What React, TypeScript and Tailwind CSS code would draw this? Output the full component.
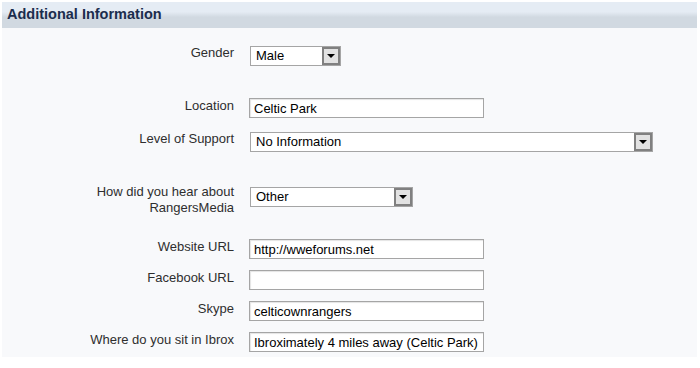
import { useState } from "react";

const font = { fontFamily: '"Liberation Sans", Arial, sans-serif' };

function Arrow() {
  return (
    <span className="flex h-full w-[18px] items-center justify-center border-2 border-[#808080] bg-[#e2e2e2]">
      <svg width="8" height="4" viewBox="0 0 8 4">
        <polygon points="0,0 8,0 4,4" fill="#000" />
      </svg>
    </span>
  );
}

function FakeSelect({ value, width }: { value: string; width: string }) {
  return (
    <div
      className={`ml-px mt-px flex h-5 items-stretch border border-[#a5a5a5] bg-white ${width}`}
    >
      <span className="flex-1 pl-[5px] text-[13px] leading-[18px] text-black">
        {value}
      </span>
      <Arrow />
    </div>
  );
}

function TextBox({ value }: { value: string }) {
  const [v, setV] = useState(value);
  return (
    <input
      className="block h-5 w-[235px] border border-[#a5a5a5] bg-white px-[4px] text-[13px] leading-[18px] text-black shadow-[inset_1px_1px_1px_#e4e4e4] outline-none"
      style={font}
      value={v}
      onChange={(e) => setV(e.target.value)}
    />
  );
}

function Row({
  label,
  mt,
  children,
}: {
  label: React.ReactNode;
  mt: string;
  children: React.ReactNode;
}) {
  return (
    <div className={`flex h-5 items-start ${mt}`}>
      <div className="w-[232px] shrink-0 text-right text-[13px] leading-4 text-[#2e2e2e]">
        {label}
      </div>
      <div className="ml-[15px]">{children}</div>
    </div>
  );
}

export default function App() {
  return (
    <div className="h-[368px] w-[700px] bg-white p-[2px] pr-[3px]" style={font}>
      {/* 見出し */}
      <div className="flex h-[26px] items-center bg-[linear-gradient(#e5ecf4_0%,#e5ecf4_38%,#d1d9e1_58%,#d1d9e1_100%)] pl-[5px]">
        <h2 className="text-[14.5px] font-bold text-[#1b2d4d]">
          Additional Information
        </h2>
      </div>

      {/* フォーム */}
      <div className="bg-[#f8f9fb] pb-[5px] pt-px">
        <Row label="Gender" mt="mt-[16px]">
          <FakeSelect value="Male" width="w-[91px]" />
        </Row>
        <Row label="Location" mt="mt-[33px]">
          <TextBox value="Celtic Park" />
        </Row>
        <Row label="Level of Support" mt="mt-[13px]">
          <FakeSelect value="No Information" width="w-[403px]" />
        </Row>
        <Row
          label={
            <div className="-mt-[2px]">
              How did you hear about
              <br />
              RangersMedia
            </div>
          }
          mt="mt-[35px]"
        >
          <FakeSelect value="Other" width="w-[163px]" />
        </Row>
        <Row label="Website URL" mt="mt-[33px]">
          <TextBox value="http://wweforums.net" />
        </Row>
        <Row label="Facebook URL" mt="mt-[11px]">
          <TextBox value="" />
        </Row>
        <Row label="Skype" mt="mt-[11px]">
          <TextBox value="celticownrangers" />
        </Row>
        <Row label="Where do you sit in Ibrox" mt="mt-[11px]">
          <TextBox value="Ibroximately 4 miles away (Celtic Park)" />
        </Row>
      </div>
    </div>
  );
}
